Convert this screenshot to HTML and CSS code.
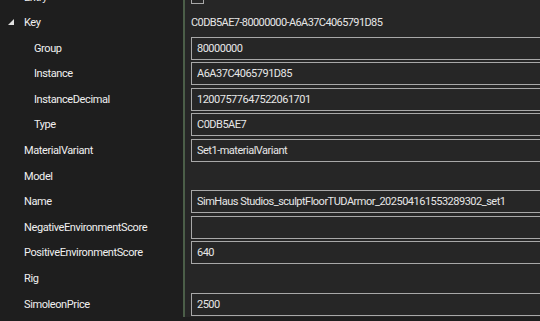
FILE: index.html
```html
<!DOCTYPE html>
<html lang="en">
<head>
    <meta charset="UTF-8">
    <meta name="viewport" content="width=device-width, initial-scale=1.0">
    <title>Properties</title>
    <link rel="stylesheet" href="styles.css">
</head>
<body>

    <div class="props">
        <div class="row">
            <div class="name">Entry</div>
            <div class="value"><span class="check"></span></div>
        </div>
        <div class="row">
            <div class="name"><span class="toggle"></span>Key</div>
            <div class="value"><span class="plain">C0DB5AE7-80000000-A6A37C4065791D85</span></div>
        </div>
        <div class="row">
            <div class="name sub">Group</div>
            <div class="value"><input type="text" value="80000000"></div>
        </div>
        <div class="row">
            <div class="name sub">Instance</div>
            <div class="value"><input type="text" value="A6A37C4065791D85"></div>
        </div>
        <div class="row">
            <div class="name sub">InstanceDecimal</div>
            <div class="value"><input type="text" value="12007577647522061701"></div>
        </div>
        <div class="row">
            <div class="name sub">Type</div>
            <div class="value"><input type="text" value="C0DB5AE7"></div>
        </div>
        <div class="row">
            <div class="name">MaterialVariant</div>
            <div class="value"><input type="text" value="Set1-materialVariant"></div>
        </div>
        <div class="row">
            <div class="name">Model</div>
            <div class="value"></div>
        </div>
        <div class="row">
            <div class="name">Name</div>
            <div class="value"><input type="text" value="SimHaus Studios_sculptFloorTUDArmor_202504161553289302_set1"></div>
        </div>
        <div class="row">
            <div class="name">NegativeEnvironmentScore</div>
            <div class="value"><input type="text" value=""></div>
        </div>
        <div class="row">
            <div class="name">PositiveEnvironmentScore</div>
            <div class="value"><input type="text" value="640"></div>
        </div>
        <div class="row">
            <div class="name">Rig</div>
            <div class="value"></div>
        </div>
        <div class="row">
            <div class="name">SimoleonPrice</div>
            <div class="value"><input type="text" value="2500"></div>
        </div>
    </div>

</body>
</html>
```

FILE: styles.css
```css
html, body {
    margin: 0;
    height: 100%;
    overflow: hidden;
    background: #1e1e1e;
}
body {
    font-family: Roboto, "Noto Sans", sans-serif;
    font-size: 11px;
    letter-spacing: -0.4px;
    color: #f0f0f0;
}
.props {
    margin-top: -15.8px;
}
.row {
    display: grid;
    grid-template-columns: 183px 1fr;
    height: 25.6px;
}
.name {
    display: flex;
    align-items: center;
    padding-left: 24px;
    white-space: nowrap;
    position: relative;
}
.name.sub {
    padding-left: 34px;
}
.toggle {
    position: absolute;
    left: 8px;
    top: 9px;
    width: 0;
    height: 0;
    border-left: 6px solid transparent;
    border-bottom: 6px solid #e0e0e0;
}
.value {
    display: flex;
    align-items: center;
    background: #262626;
    border-left: 2px solid #4b5e48;
    padding-left: 6px;
    min-width: 0;
}
.plain {
    white-space: nowrap;
    color: #e6e6e6;
    letter-spacing: -0.6px;
}
.check {
    width: 11px;
    height: 11px;
    border: 1px solid #a8a8a8;
    background: #262626;
}
input {
    box-sizing: border-box;
    width: 360px;
    flex: none;
    height: 23px;
    margin: 0;
    padding: 0 5px;
    font: inherit;
    letter-spacing: -0.5px;
    color: #e6e6e6;
    background: #262626;
    border: 1px solid #a8a8a8;
    border-radius: 0;
    outline: none;
}
```
